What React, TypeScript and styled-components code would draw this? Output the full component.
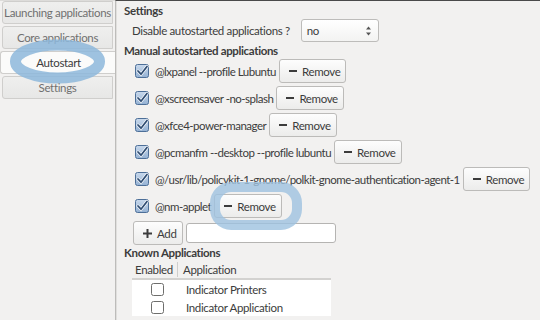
import React from 'react';
import styled, { createGlobalStyle } from 'styled-components';

const GlobalStyle = createGlobalStyle`
	html, body {
		margin: 0;
		padding: 0;
		background: #f2f1f0;
	}
	body {
		font-family: Lato, "DejaVu Sans", sans-serif;
		font-size: 11.5px;
		letter-spacing: -0.35px;
		color: #3c3c3c;
	}
`;

const Window = styled.div`
	position: relative;
	display: flex;
	width: 540px;
	height: 320px;
	overflow: hidden;
	background: #f2f1f0;
`;

const TabColumn = styled.div`
	width: 115px;
	flex-shrink: 0;
	display: flex;
	flex-direction: column;
	gap: 2px;
	border-top: 1px solid #dddcda;
	box-sizing: border-box;
`;

const Tab = styled.div<{ $active?: boolean }>`
	height: 23px;
	box-sizing: border-box;
	display: flex;
	align-items: center;
	justify-content: center;
	margin-left: ${(p) => (p.$active ? '0' : '2px')};
	margin-right: ${(p) => (p.$active ? '-1px' : '2px')};
	border: 1px solid #cfcecc;
	border-right: ${(p) => (p.$active ? 'none' : '1px solid #cfcecc')};
	border-radius: 3px 0 0 3px;
	background: ${(p) => (p.$active ? '#fbfbfa' : 'linear-gradient(#efefee, #e7e7e6)')};
	color: ${(p) => (p.$active ? '#3c3c3c' : '#707070')};
	white-space: nowrap;
`;

const Panel = styled.div`
	flex: 1;
	display: flex;
	flex-direction: column;
	padding: 1px 0 0 8px;
	border-top: 1px solid #4a4a4a;
	border-left: 1px solid #bdbcba;
	box-shadow: inset 1px 0 0 #e0dfdd;
`;

const Heading = styled.div<{ $top?: number }>`
	height: 16px;
	line-height: 16px;
	font-weight: 700;
	color: #3c3c3c;
	margin-top: ${(p) => p.$top ?? 0}px;
`;

const OptionRow = styled.div`
	display: flex;
	align-items: center;
	height: 23px;
	padding-left: 8px;
	gap: 11px;
`;

const Select = styled.div`
	position: relative;
	width: 78px;
	height: 23px;
	box-sizing: border-box;
	display: flex;
	align-items: center;
	padding-left: 5px;
	border: 1px solid #bdbcba;
	border-radius: 3px;
	background: linear-gradient(#ffffff, #f3f3f2);
`;

const Spinner = styled.svg`
	margin-left: auto;
	margin-right: 6px;
`;

const AppList = styled.div`
	display: flex;
	flex-direction: column;
	gap: 3px;
	padding-left: 11px;
`;

const AppRow = styled.div`
	display: flex;
	align-items: center;
	height: 24px;
`;

const AppName = styled.span`
	margin-left: 6px;
	margin-right: 3px;
	letter-spacing: -0.5px;
	white-space: nowrap;
`;

const Button = styled.div`
	height: 24px;
	box-sizing: border-box;
	display: flex;
	align-items: center;
	gap: 5px;
	padding: 0 5px 0 9px;
	border: 1px solid #bcbbb9;
	border-radius: 3px;
	background: linear-gradient(#fdfdfd, #ececeb);
	color: #3c3c3c;
	white-space: nowrap;
`;

const AddRow = styled.div`
	display: flex;
	align-items: center;
	gap: 3px;
	height: 24px;
	margin-top: 3px;
	padding-left: 9px;
`;

const Entry = styled.div`
	width: 150px;
	height: 20px;
	box-sizing: border-box;
	border: 1px solid #b5b4b2;
	border-radius: 3px;
	background: #ffffff;
`;

const Table = styled.div`
	width: 199px;
	margin-left: 8px;
	display: flex;
	flex-direction: column;
`;

const TableHead = styled.div`
	display: flex;
	align-items: center;
	height: 17px;
	border-bottom: 2px solid #d3d2d0;
`;

const HeadCell = styled.div<{ $w?: number; $sep?: boolean }>`
	width: ${(p) => (p.$w ? `${p.$w}px` : 'auto')};
	flex: ${(p) => (p.$w ? 'none' : '1')};
	padding-left: ${(p) => (p.$sep ? 5 : 3)}px;
	border-left: ${(p) => (p.$sep ? '1px solid #cfcecc' : 'none')};
	box-sizing: border-box;
	line-height: 15px;
`;

const TableBody = styled.div`
	background: #ffffff;
	flex: 1;
`;

const TableRow = styled.div`
	display: flex;
	align-items: center;
	height: 18px;
`;

const CheckCell = styled.div`
	width: 50px;
	display: flex;
	justify-content: center;
`;

const CellText = styled.span`
	padding-left: 4px;
`;

const Highlight = styled.svg`
	position: absolute;
	pointer-events: none;
`;

const Checked = () => (
	<svg width="14" height="14" viewBox="0 0 14 14">
		<defs>
			<linearGradient id="cb" x1="0" y1="0" x2="0" y2="1">
				<stop offset="0" stopColor="#c9d9ec" />
				<stop offset="1" stopColor="#94b1d3" />
			</linearGradient>
		</defs>
		<rect x="0.5" y="0.5" width="13" height="13" rx="2" fill="url(#cb)" stroke="#4d6f98" />
		<path d="M3 7 L6 10.2 L12 2.5" fill="none" stroke="#ffffff" strokeWidth="3" strokeLinecap="round" />
		<path d="M3 7 L6 10.2 L12 2.5" fill="none" stroke="#2f4d73" strokeWidth="1.8" strokeLinecap="round" />
	</svg>
);

const Unchecked = () => (
	<svg width="13" height="13" viewBox="0 0 13 13">
		<rect x="0.5" y="0.5" width="12" height="12" rx="2" fill="#ffffff" stroke="#6e6e6c" />
	</svg>
);

const Minus = () => (
	<svg width="8" height="8" viewBox="0 0 8 8">
		<rect x="0" y="3" width="8" height="2" fill="#3c3c3c" />
	</svg>
);

const Plus = () => (
	<svg width="9" height="9" viewBox="0 0 9 9">
		<rect x="0" y="3.5" width="9" height="2" fill="#3c3c3c" />
		<rect x="3.5" y="0" width="2" height="9" fill="#3c3c3c" />
	</svg>
);

const apps = [
	'@lxpanel --profile Lubuntu',
	'@xscreensaver -no-splash',
	'@xfce4-power-manager',
	'@pcmanfm --desktop --profile lubuntu',
	'@/usr/lib/policykit-1-gnome/polkit-gnome-authentication-agent-1',
	'@nm-applet',
];

const known = ['Indicator Printers', 'Indicator Application'];

const App = () => {
	return (
		<Window>
			<GlobalStyle />
			<TabColumn>
				<Tab>Launching applications</Tab>
				<Tab>Core applications</Tab>
				<Tab $active>Autostart</Tab>
				<Tab>Settings</Tab>
			</TabColumn>
			<Panel>
				<Heading $top={1}>Settings</Heading>
				<OptionRow>
					<span>Disable autostarted applications ?</span>
					<Select>
						no
						<Spinner width="7" height="12" viewBox="0 0 7 12">
							<path d="M3.5 1.5 L6 4.5 L1 4.5 Z" fill="#555" />
							<path d="M3.5 10.5 L6 7.5 L1 7.5 Z" fill="#555" />
						</Spinner>
					</Select>
				</OptionRow>
				<Heading $top={1}>Manual autostarted applications</Heading>
				<AppList>
					{apps.map((name) => (
						<AppRow key={name}>
							<Checked />
							<AppName>{name}</AppName>
							<Button>
								<Minus />
								Remove
							</Button>
						</AppRow>
					))}
				</AppList>
				<AddRow>
					<Button>
						<Plus />
						Add
					</Button>
					<Entry />
				</AddRow>
				<Heading $top={0}>Known Applications</Heading>
				<Table>
					<TableHead>
						<HeadCell $w={45}>Enabled</HeadCell>
						<HeadCell $sep>Application</HeadCell>
					</TableHead>
					<TableBody>
						{known.map((k) => (
							<TableRow key={k}>
								<CheckCell>
									<Unchecked />
								</CheckCell>
								<CellText>{k}</CellText>
							</TableRow>
						))}
					</TableBody>
				</Table>
			</Panel>
			<Highlight style={{ left: 4, top: 35 }} width="106" height="54" viewBox="0 0 106 54">
				<ellipse cx="53.5" cy="26.5" rx="42" ry="16.5" fill="none" stroke="#8db7da" strokeOpacity="0.85" strokeWidth="11" />
			</Highlight>
			<Highlight style={{ left: 206, top: 178 }} width="100" height="56" viewBox="0 0 100 56">
				<rect x="9" y="9" width="82" height="38" rx="16" fill="none" stroke="#9ec2e0" strokeOpacity="0.8" strokeWidth="10" />
			</Highlight>
		</Window>
	);
};

export default App;
